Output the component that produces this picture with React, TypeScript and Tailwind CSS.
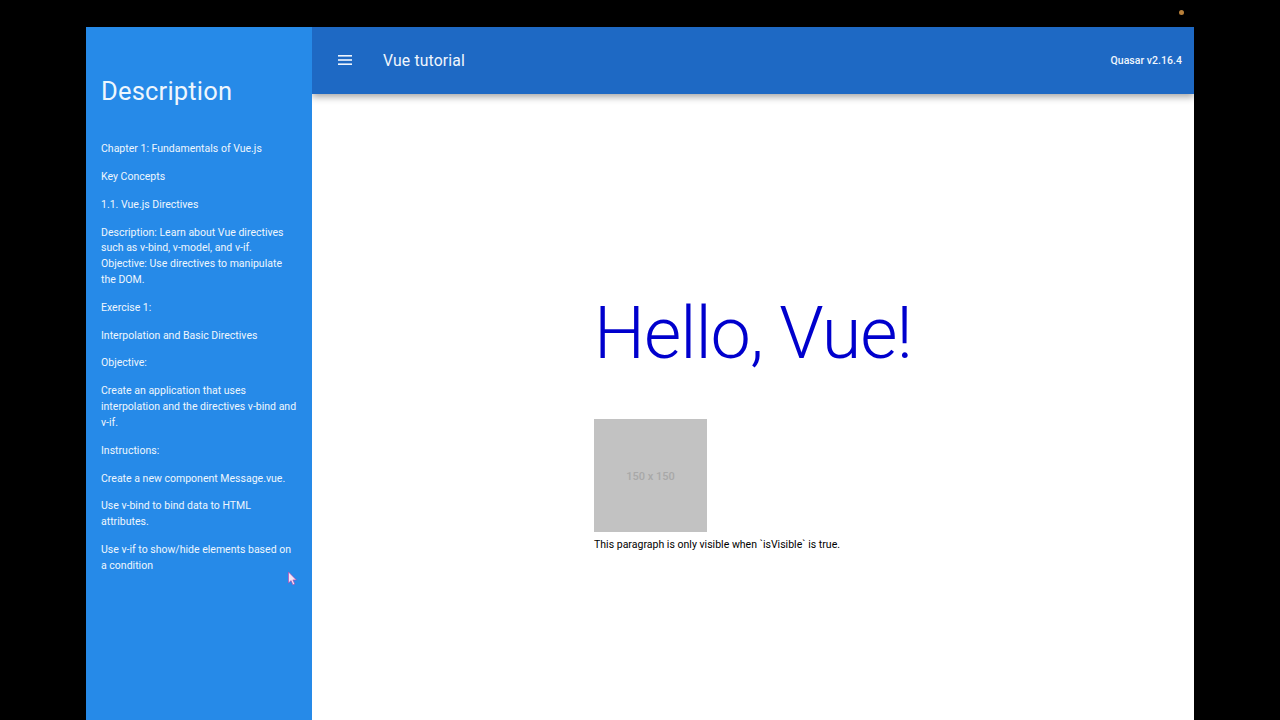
import React from 'react';

const notes = [
  ['Chapter 1: Fundamentals of Vue.js'],
  ['Key Concepts'],
  ['1.1. Vue.js Directives'],
  ['Description: Learn about Vue directives', 'such as v-bind, v-model, and v-if.', 'Objective: Use directives to manipulate', 'the DOM.'],
  ['Exercise 1:'],
  ['Interpolation and Basic Directives'],
  ['Objective:'],
  ['Create an application that uses', 'interpolation and the directives v-bind and', 'v-if.'],
  ['Instructions:'],
  ['Create a new component Message.vue.'],
  ['Use v-bind to bind data to HTML', 'attributes.'],
  ['Use v-if to show/hide elements based on', 'a condition'],
];

const App: React.FC = () => {
  return (
    <div className="relative flex h-[720px] w-[1280px] overflow-hidden bg-black pl-[86px] pt-[27px] font-['Roboto',sans-serif]">
      <span className="absolute left-[1179px] top-[10px] h-[5px] w-[5px] rounded-full bg-[#b9803a]" />

      <div className="relative flex h-[693px] w-[1108px]">
        <aside className="relative z-20 h-full w-[226px] shrink-0 bg-[#268ae8] pl-[15px] pr-[12px] text-[#eef6fd]">
          <h4 className="mb-[32px] mt-[46px] text-[25.5px] leading-[36px] tracking-[0.2px]">Description</h4>
          <div className="flex flex-col gap-[12.05px] text-[10.5px] leading-[15.8px] tracking-[0.01px]">
            {notes.map((lines, i) => (
              <p key={i}>
                {lines.map((line) => (
                  <span key={line} className="block whitespace-nowrap">{line}</span>
                ))}
              </p>
            ))}
          </div>
        </aside>

        <div className="flex min-w-0 flex-1 flex-col bg-white">
          <header className="z-10 flex h-[66.5px] shrink-0 items-center bg-[#1e69c4] pl-[26px] pr-[12px] text-[#f0f6fd] shadow-[0_3px_7px_rgba(0,0,0,0.35)]">
            <svg className="h-[14px] w-[14px]" viewBox="0 0 14 14" fill="currentColor">
              <rect x="0" y="2" width="14" height="1.6" />
              <rect x="0" y="6.2" width="14" height="1.6" />
              <rect x="0" y="10.4" width="14" height="1.6" />
            </svg>
            <div className="ml-[31px] flex-1 pt-[2px] text-[15.75px] leading-none tracking-[0.16px]">Vue tutorial</div>
            <div className="pt-[2px] text-[10.5px] font-medium leading-none tracking-[0.03px]">Quasar v2.16.4</div>
          </header>

          <main className="flex flex-1 flex-col pl-[282px] pt-[194.5px]">
            <h1 className="text-[72px] font-light leading-[92px] tracking-[-1px] text-[#0000cd]">Hello, Vue!</h1>
            <div className="mt-[39px] flex h-[113px] w-[113px] items-center justify-center bg-[#c2c2c2] pt-[3px] text-[11px] font-medium text-[#a8a8a8]">150 x 150</div>
            <p className="mt-[5px] text-[10.5px] leading-[15.75px] tracking-[0.02px] text-black">This paragraph is only visible when `isVisible` is true.</p>
          </main>
        </div>

        <svg className="absolute left-[201px] top-[544px] z-30 h-[15px] w-[11px]" viewBox="0 0 11 15">
          <path d="M1.5 1v11l2.6-2.4 1.8 4.2 1.8-.8-1.8-4.1h3.4z" fill="#f4e4f4" stroke="#c23ea8" strokeWidth="0.6" />
        </svg>
      </div>
    </div>
  );
};

export default App;
